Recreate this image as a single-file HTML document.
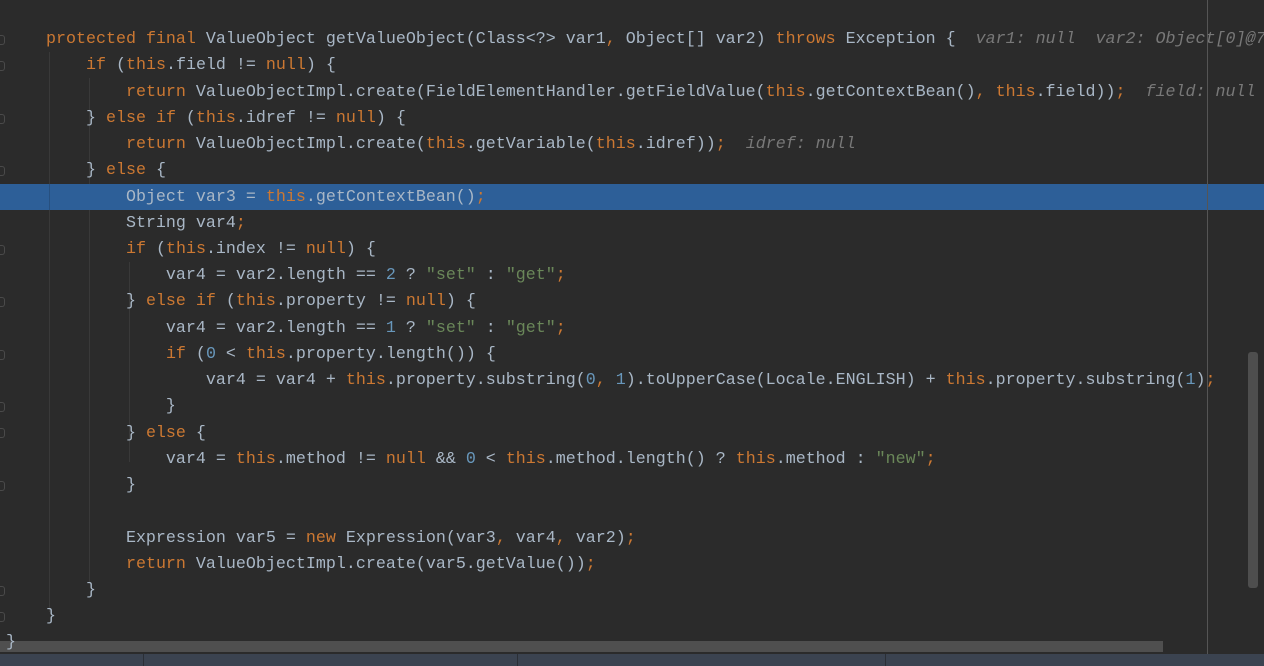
<!DOCTYPE html>
<html><head><meta charset="utf-8"><style>
html,body{margin:0;padding:0;background:#2b2b2b;width:1264px;height:666px;overflow:hidden;position:relative}
.l{position:absolute;left:6px;height:26px;line-height:26px;font-family:"Liberation Mono",monospace;font-size:16.67px;color:#a9b7c6;white-space:pre}
.k{color:#cc7832}.n{color:#6897bb}.s{color:#6a8759}
.h{color:#787878;font-style:italic;font-size:16.67px}
.sel{position:absolute;left:0;top:184px;width:1264px;height:26px;background:#2d5f98}
.g{position:absolute;width:1px;background:#393939}
.f{position:absolute;left:0;width:4px;height:8px;border:1px solid #4a4a4a;border-left:none;border-radius:0 3px 3px 0}
</style></head><body>
<div class="g" style="left:49px;top:52px;height:560px"></div>
<div class="g" style="left:89px;top:78px;height:505px"></div>
<div class="g" style="left:129px;top:262px;height:200px"></div>
<div class="sel"></div>
<div style="position:absolute;left:49px;top:184px;width:1px;height:26px;background:#27507f"></div>
<div style="position:absolute;left:1207px;top:0;width:1px;height:654px;background:#555"></div>
<div style="position:absolute;left:1248px;top:352px;width:10px;height:236px;background:#4e4e4e;border-radius:3px"></div>
<div style="position:absolute;left:0;top:641px;width:1163px;height:11px;background:#4f4f4f"></div>
<div style="position:absolute;left:0;top:654px;width:1264px;height:12px;background:#3b4350"></div>
<div style="position:absolute;left:143px;top:654px;width:1px;height:12px;background:#2b2f36"></div>
<div style="position:absolute;left:517px;top:654px;width:1px;height:12px;background:#2b2f36"></div>
<div style="position:absolute;left:885px;top:654px;width:1px;height:12px;background:#2b2f36"></div>
<div class="f" style="top:35px"></div><div class="f" style="top:61px"></div><div class="f" style="top:114px"></div><div class="f" style="top:166px"></div><div class="f" style="top:245px"></div><div class="f" style="top:297px"></div><div class="f" style="top:350px"></div><div class="f" style="top:402px"></div><div class="f" style="top:428px"></div><div class="f" style="top:481px"></div><div class="f" style="top:586px"></div><div class="f" style="top:612px"></div>

<div class="l" style="top:27px">    <span class="k">protected final</span> ValueObject getValueObject(Class&lt;?&gt; var1<span class="k">,</span> Object[] var2) <span class="k">throws</span> Exception {  <span class="h">var1: null  var2: Object[0]@7</span></div>
<div class="l" style="top:53px">        <span class="k">if</span> (<span class="k">this</span>.field != <span class="k">null</span>) {</div>
<div class="l" style="top:80px">            <span class="k">return</span> ValueObjectImpl.create(FieldElementHandler.getFieldValue(<span class="k">this</span>.getContextBean()<span class="k">,</span> <span class="k">this</span>.field))<span class="k">;</span>  <span class="h">field: null</span></div>
<div class="l" style="top:106px">        } <span class="k">else if</span> (<span class="k">this</span>.idref != <span class="k">null</span>) {</div>
<div class="l" style="top:132px">            <span class="k">return</span> ValueObjectImpl.create(<span class="k">this</span>.getVariable(<span class="k">this</span>.idref))<span class="k">;</span>  <span class="h">idref: null</span></div>
<div class="l" style="top:158px">        } <span class="k">else</span> {</div>
<div class="l" style="top:185px">            Object var3 = <span class="k">this</span>.getContextBean()<span class="k">;</span></div>
<div class="l" style="top:211px">            String var4<span class="k">;</span></div>
<div class="l" style="top:237px">            <span class="k">if</span> (<span class="k">this</span>.index != <span class="k">null</span>) {</div>
<div class="l" style="top:263px">                var4 = var2.length == <span class="n">2</span> ? <span class="s">"set"</span> : <span class="s">"get"</span><span class="k">;</span></div>
<div class="l" style="top:289px">            } <span class="k">else if</span> (<span class="k">this</span>.property != <span class="k">null</span>) {</div>
<div class="l" style="top:316px">                var4 = var2.length == <span class="n">1</span> ? <span class="s">"set"</span> : <span class="s">"get"</span><span class="k">;</span></div>
<div class="l" style="top:342px">                <span class="k">if</span> (<span class="n">0</span> &lt; <span class="k">this</span>.property.length()) {</div>
<div class="l" style="top:368px">                    var4 = var4 + <span class="k">this</span>.property.substring(<span class="n">0</span><span class="k">,</span> <span class="n">1</span>).toUpperCase(Locale.ENGLISH) + <span class="k">this</span>.property.substring(<span class="n">1</span>)<span class="k">;</span></div>
<div class="l" style="top:394px">                }</div>
<div class="l" style="top:421px">            } <span class="k">else</span> {</div>
<div class="l" style="top:447px">                var4 = <span class="k">this</span>.method != <span class="k">null</span> &amp;&amp; <span class="n">0</span> &lt; <span class="k">this</span>.method.length() ? <span class="k">this</span>.method : <span class="s">"new"</span><span class="k">;</span></div>
<div class="l" style="top:473px">            }</div>
<div class="l" style="top:526px">            Expression var5 = <span class="k">new</span> Expression(var3<span class="k">,</span> var4<span class="k">,</span> var2)<span class="k">;</span></div>
<div class="l" style="top:552px">            <span class="k">return</span> ValueObjectImpl.create(var5.getValue())<span class="k">;</span></div>
<div class="l" style="top:578px">        }</div>
<div class="l" style="top:604px">    }</div>
<div class="l" style="top:630px">}</div>
</body></html>
